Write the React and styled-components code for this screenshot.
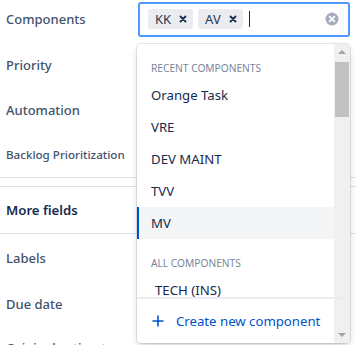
import React from "react";
import styled, { createGlobalStyle } from "styled-components";

const Global = createGlobalStyle`
  html, body { margin: 0; padding: 0; background: #fff; }
  body { font-family: "Noto Sans", "Open Sans", sans-serif; }
`;

const Page = styled.div`
  position: relative;
  width: 356px;
  height: 345px;
  overflow: hidden;
  background: #fff;
`;

const Row = styled.div`
  display: grid;
  grid-template-columns: 138px 1fr;
  align-items: center;
  height: ${(p) => p.h || 44}px;
  margin-bottom: ${(p) => p.mb || 0}px;
`;

const Label = styled.div`
  padding-left: 6px;
  font-size: ${(p) => p.size || 13}px;
  font-weight: 500;
  color: #42526e;
  white-space: nowrap;
`;

const Divider = styled.div`
  height: 1px;
  background: #dfe1e6;
  margin-top: ${(p) => p.mt || 0}px;
`;

const SectionHead = styled.div`
  height: 46px;
  display: flex;
  align-items: center;
  padding-left: 6px;
  font-size: 13.2px;
  font-weight: 600;
  color: #172b4d;
`;

const Input = styled.div`
  box-sizing: border-box;
  width: 212px;
  height: 35px;
  border: 2px solid #4c9aff;
  border-radius: 3px;
  display: flex;
  align-items: center;
  padding: 0 8px;
  gap: 5px;
  background: #fff;
`;

const Tag = styled.span`
  display: inline-flex;
  align-items: center;
  gap: 8px;
  height: 20px;
  padding: 0 6px 0 7px;
  background: #ebecf0;
  border-radius: 3px;
  font-size: 13px;
  color: #253858;
`;

const Caret = styled.span`
  width: 1px;
  height: 16px;
  background: #172b4d;
  margin-left: 1px;
`;

const Clear = styled.span`
  margin-left: auto;
  display: flex;
  margin-right: 1px;
`;

const Menu = styled.div`
  position: absolute;
  left: 137px;
  top: 44px;
  width: 213px;
  height: 299px;
  background: #fff;
  border-radius: 4px;
  box-shadow: 0 0 0 1px rgba(9, 30, 66, 0.1), 0 4px 8px -2px rgba(9, 30, 66, 0.25);
  display: flex;
  flex-direction: column;
  overflow: hidden;
`;

const Body = styled.div`
  flex: 1;
  display: flex;
  min-height: 0;
`;

const List = styled.div`
  flex: 1;
  overflow: hidden;
`;

const GroupTitle = styled.div`
  padding: 18px 14px 4px;
  line-height: 13px;
  font-size: 10.2px;
  color: #7a869a;
  text-transform: uppercase;
`;

const Item = styled.div`
  height: 32px;
  display: flex;
  align-items: center;
  box-sizing: border-box;
  padding-left: ${(p) => (p.indent ? 16 : 12)}px;
  font-size: 13.2px;
  color: #172b4d;
  background: ${(p) => (p.active ? "#f4f5f7" : "#fff")};
  border-left: 2px solid ${(p) => (p.active ? "#0052cc" : "transparent")};
`;

const Scrollbar = styled.div`
  width: 16px;
  background: #f0f0f0;
  display: flex;
  flex-direction: column;
  align-items: center;
  padding-top: 6px;
`;

const Arrow = styled.div`
  width: 0;
  height: 0;
  border-left: 4px solid transparent;
  border-right: 4px solid transparent;
  ${(p) => (p.down ? "border-top: 4px solid #a3a3a3;" : "border-bottom: 4px solid #a3a3a3;")}
`;

const Thumb = styled.div`
  width: 14px;
  height: 55px;
  margin-top: 8px;
  background: #c1c1c1;
`;

const Footer = styled.div`
  border-top: 2px solid #ebecf0;
  height: 44px;
  display: flex;
  align-items: center;
  padding-left: 15px;
  gap: 12px;
  font-size: 13.2px;
  color: #0052cc;
  position: relative;
`;

const DownArrow = styled.div`
  position: absolute;
  right: 0;
  top: 0;
  bottom: 0;
  width: 16px;
  background: #f0f0f0;
  display: flex;
  justify-content: center;
  align-items: flex-end;
  padding-bottom: 6px;
  box-sizing: border-box;
`;

const XIcon = () => (
  <svg width="8" height="8" viewBox="0 0 8 8">
    <path d="M1.5 1.5l5 5M6.5 1.5l-5 5" stroke="#172b4d" strokeWidth="1.8" strokeLinecap="round" />
  </svg>
);

const recent = ["Orange Task", "VRE", "DEV MAINT", "TVV", "MV"];

export default function App() {
  return (
    <Page>
      <Global />
      <Row h={38} mb={5}>
        <Label>Components</Label>
        <Input>
          <Tag>KK <XIcon /></Tag>
          <Tag>AV <XIcon /></Tag>
          <Caret />
          <Clear>
            <svg width="14" height="14" viewBox="0 0 14 14">
              <circle cx="7" cy="7" r="6.5" fill="#a5adba" />
              <path d="M4.6 4.6l4.8 4.8M9.4 4.6l-4.8 4.8" stroke="#fff" strokeWidth="1.8" strokeLinecap="round" />
            </svg>
          </Clear>
        </Input>
      </Row>
      <Row><Label>Priority</Label></Row>
      <Row h={45}><Label>Automation</Label></Row>
      <Row><Label size={11.6}>Backlog Prioritization</Label></Row>
      <Divider mt={1} />
      <Divider mt={8} />
      <SectionHead>More fields</SectionHead>
      <Divider />
      <Row h={48}><Label>Labels</Label></Row>
      <Row><Label>Due date</Label></Row>
      <Row><Label>Original estimate</Label></Row>

      <Menu>
        <Body>
          <List>
            <GroupTitle>Recent components</GroupTitle>
            {recent.map((r) => (
              <Item key={r} active={r === "MV"}>{r}</Item>
            ))}
            <GroupTitle>All components</GroupTitle>
            <Item indent>TECH (INS)</Item>
          </List>
          <Scrollbar>
            <Arrow />
            <Thumb />
          </Scrollbar>
        </Body>
        <Footer>
          <svg width="12" height="12" viewBox="0 0 12 12">
            <path d="M6 0.5v11M0.5 6h11" stroke="#0052cc" strokeWidth="1.6" />
          </svg>
          Create new component
          <DownArrow><Arrow down /></DownArrow>
        </Footer>
      </Menu>
    </Page>
  );
}
